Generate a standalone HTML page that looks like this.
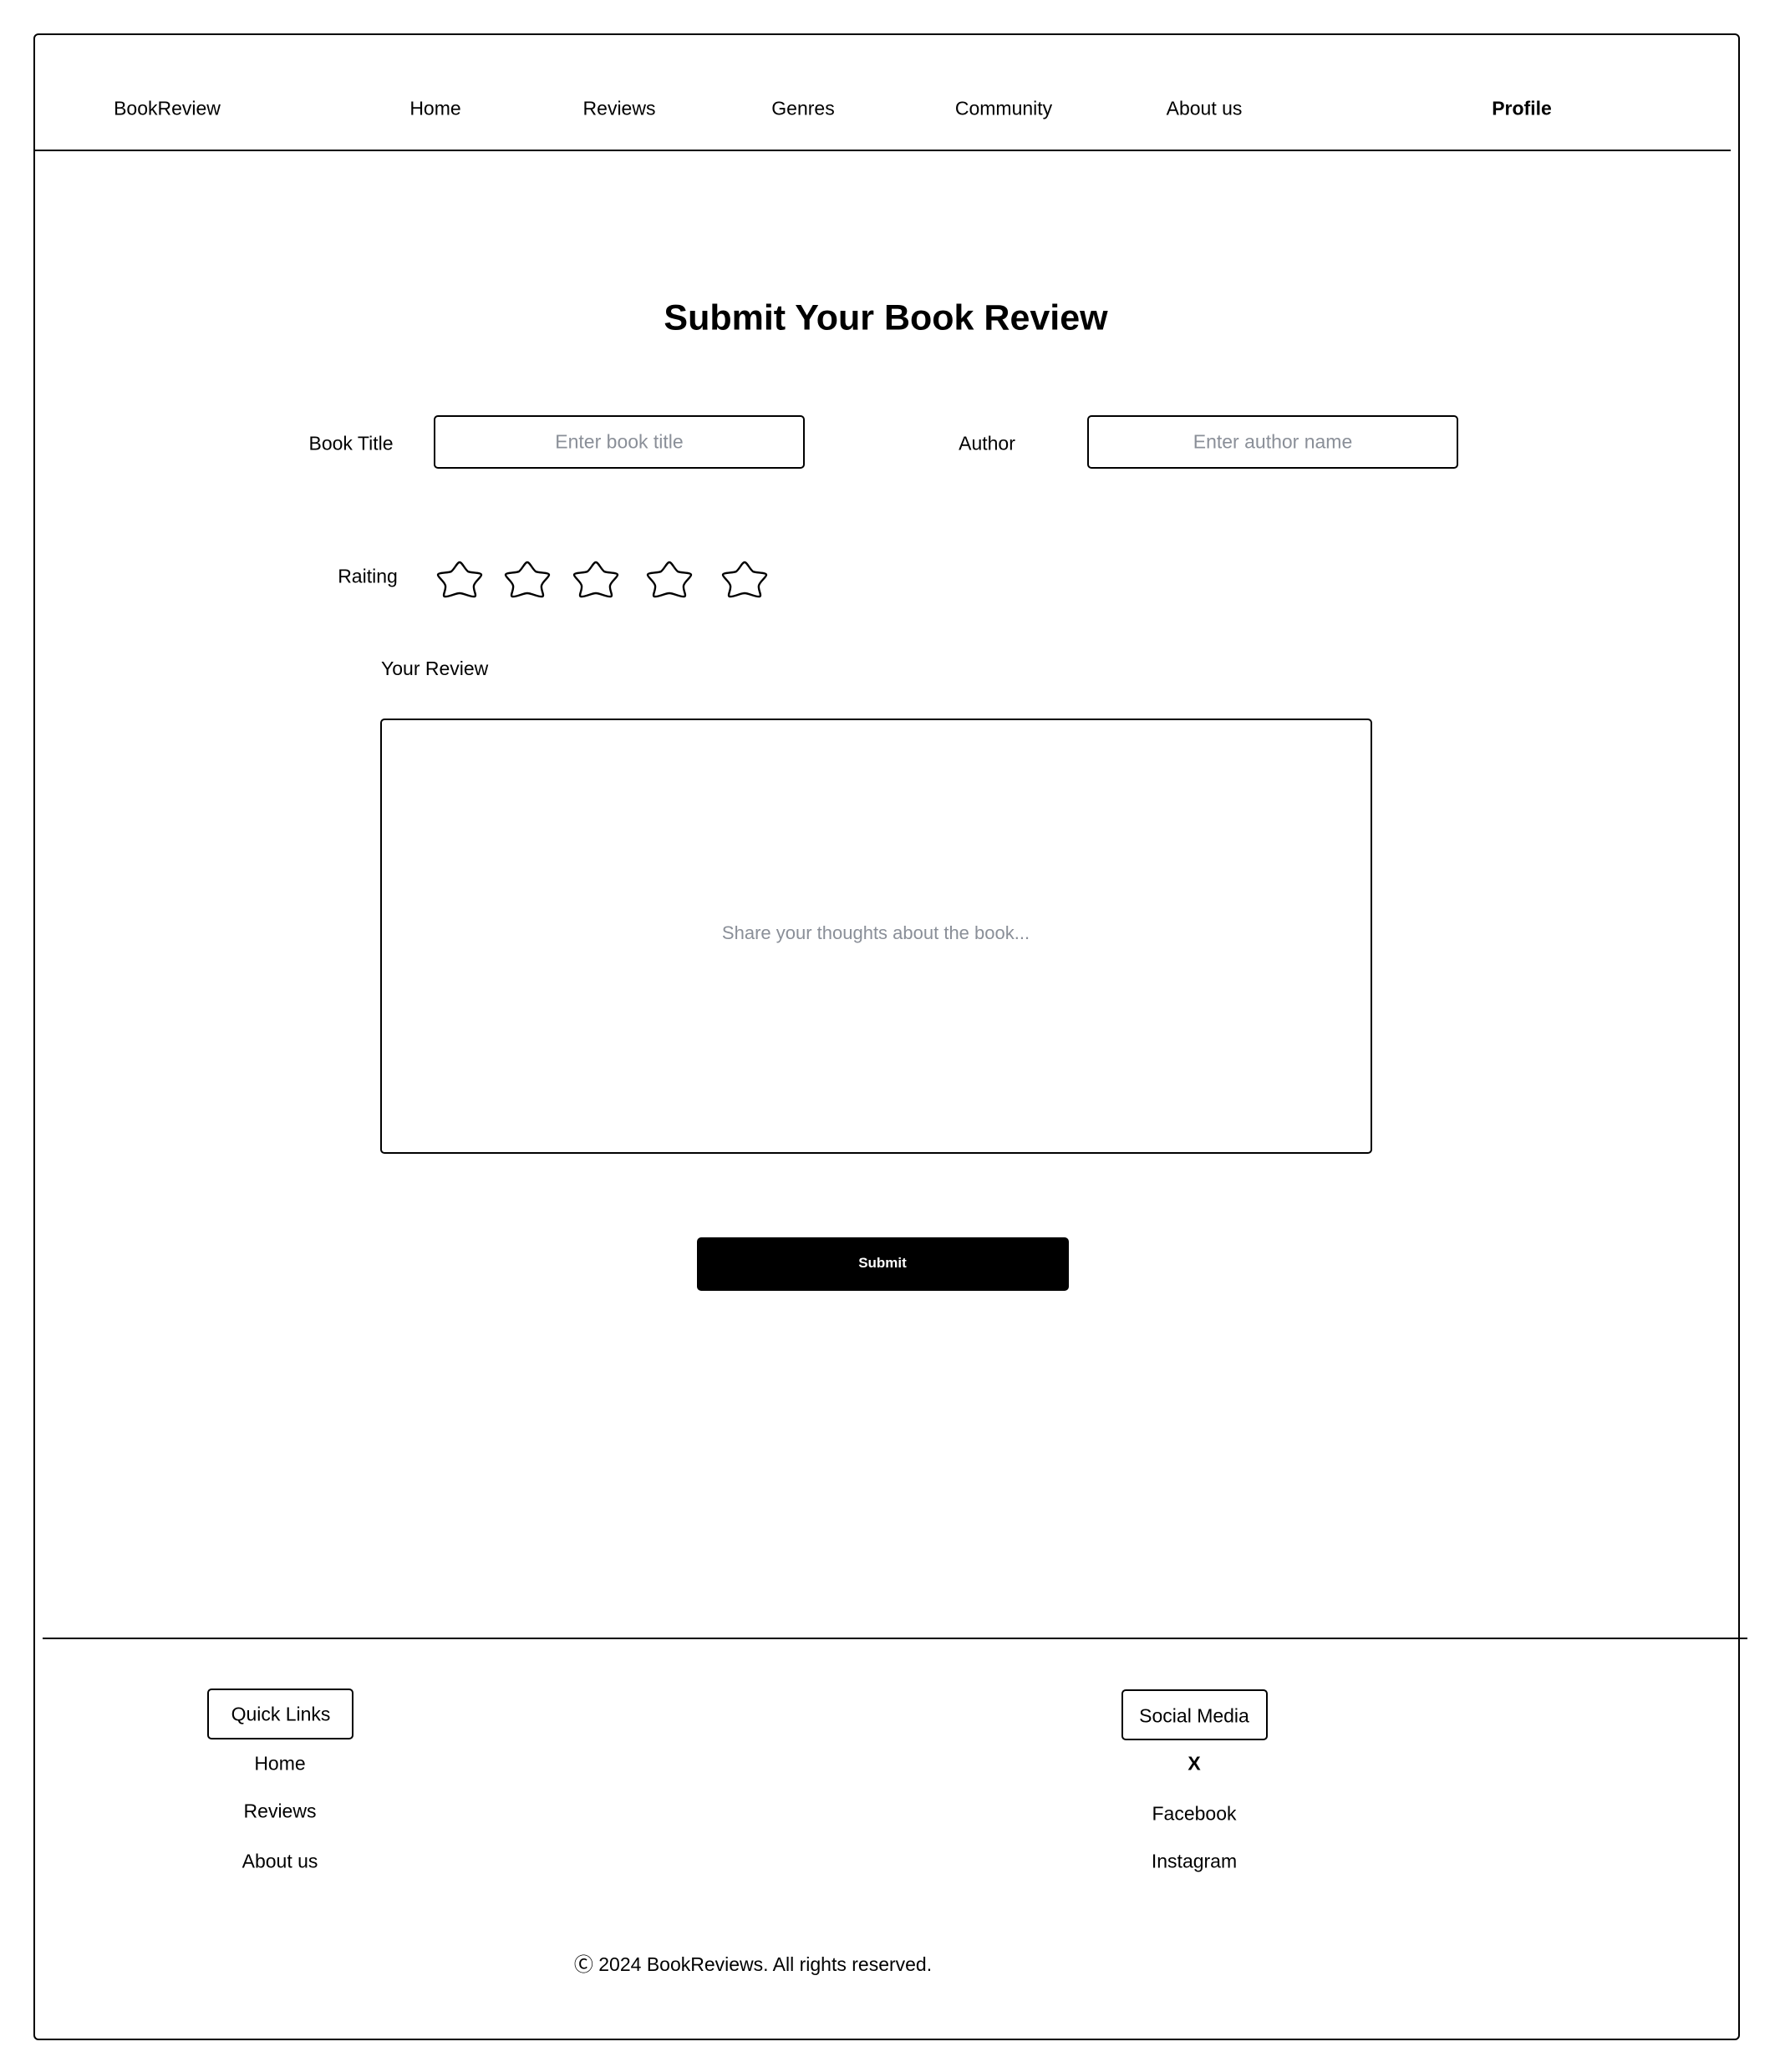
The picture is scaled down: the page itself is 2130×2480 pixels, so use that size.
<!DOCTYPE html>
<html><head><meta charset="utf-8"><style>
*{margin:0;padding:0;box-sizing:border-box}
body{width:2130px;height:2480px;background:#fff;position:relative;font-family:"Liberation Sans",Arial,sans-serif;color:#000;overflow:hidden}
.a{position:absolute}
.c{position:absolute;transform:translate(-50%,-50%);white-space:nowrap}
.n{font-size:23px}
.box{position:absolute;border:2px solid #000;border-radius:5px}
.ph{color:#8a8f98;font-size:23px}
.f{font-size:23px}
</style></head><body>
<div class="box" style="left:40px;top:40px;width:2042px;height:2402px;border-radius:6px"></div>
<div class="a" style="left:40px;top:179px;width:2031px;height:2px;background:#000"></div>

<div class="c n" style="left:200px;top:130px">BookReview</div>
<div class="c n" style="left:521px;top:130px">Home</div>
<div class="c n" style="left:741px;top:130px">Reviews</div>
<div class="c n" style="left:961px;top:130px">Genres</div>
<div class="c n" style="left:1201px;top:130px">Community</div>
<div class="c n" style="left:1441px;top:130px">About us</div>
<div class="c n" style="left:1821px;top:130px;font-weight:bold">Profile</div>

<div class="c" style="left:1060px;top:381px;font-size:43px;font-weight:bold">Submit Your Book Review</div>

<div class="c n" style="left:420px;top:531px">Book Title</div>
<div class="box" style="left:519px;top:497px;width:444px;height:64px"></div>
<div class="c ph" style="left:741px;top:529px">Enter book title</div>
<div class="c n" style="left:1181px;top:531px">Author</div>
<div class="box" style="left:1301px;top:497px;width:444px;height:64px"></div>
<div class="c ph" style="left:1523px;top:529px">Enter author name</div>

<div class="c n" style="left:440px;top:690px">Raiting</div>
<svg class="a" style="left:0;top:0" width="1000" height="760">
<defs><path id="s" d="M0,-20 C3,-20 6,-12 10,-9 C14,-7 26,-8 26,-5 C26,-2 18,3 17,8 C16,13 21,20 18,21 C14,22 5,17 0,17 C-5,17 -14,22 -18,21 C-21,20 -16,13 -17,8 C-18,3 -26,-2 -26,-5 C-26,-8 -14,-7 -10,-9 C-6,-12 -3,-20 0,-20Z" fill="none" stroke="#000" stroke-width="2.4"/></defs>
<use href="#s" x="550" y="693"/><use href="#s" x="631" y="693"/><use href="#s" x="713" y="693"/><use href="#s" x="801" y="693"/><use href="#s" x="891" y="693"/>
</svg>

<div class="a n" style="left:456px;top:787px">Your Review</div>
<div class="box" style="left:455px;top:860px;width:1187px;height:521px"></div>
<div class="c ph" style="left:1048px;top:1117px;font-size:22px">Share your thoughts about the book...</div>

<div class="a" style="left:834px;top:1481px;width:445px;height:64px;background:#000;border-radius:5px"></div>
<div class="c" style="left:1056px;top:1512px;color:#fff;font-size:17px;font-weight:bold">Submit</div>

<div class="a" style="left:51px;top:1960px;width:2040px;height:2px;background:#000"></div>

<div class="box" style="left:248px;top:2021px;width:175px;height:61px"></div>
<div class="c f" style="left:336px;top:2052px">Quick Links</div>
<div class="c f" style="left:335px;top:2111px">Home</div>
<div class="c f" style="left:335px;top:2168px">Reviews</div>
<div class="c f" style="left:335px;top:2228px">About us</div>

<div class="box" style="left:1342px;top:2022px;width:175px;height:61px"></div>
<div class="c f" style="left:1429px;top:2054px">Social Media</div>
<div class="c f" style="left:1429px;top:2111px;font-weight:bold">X</div>
<div class="c f" style="left:1429px;top:2171px">Facebook</div>
<div class="c f" style="left:1429px;top:2228px">Instagram</div>

<div class="c f" style="left:901px;top:2349px">Ⓒ 2024 BookReviews. All rights reserved.</div>
</body></html>
